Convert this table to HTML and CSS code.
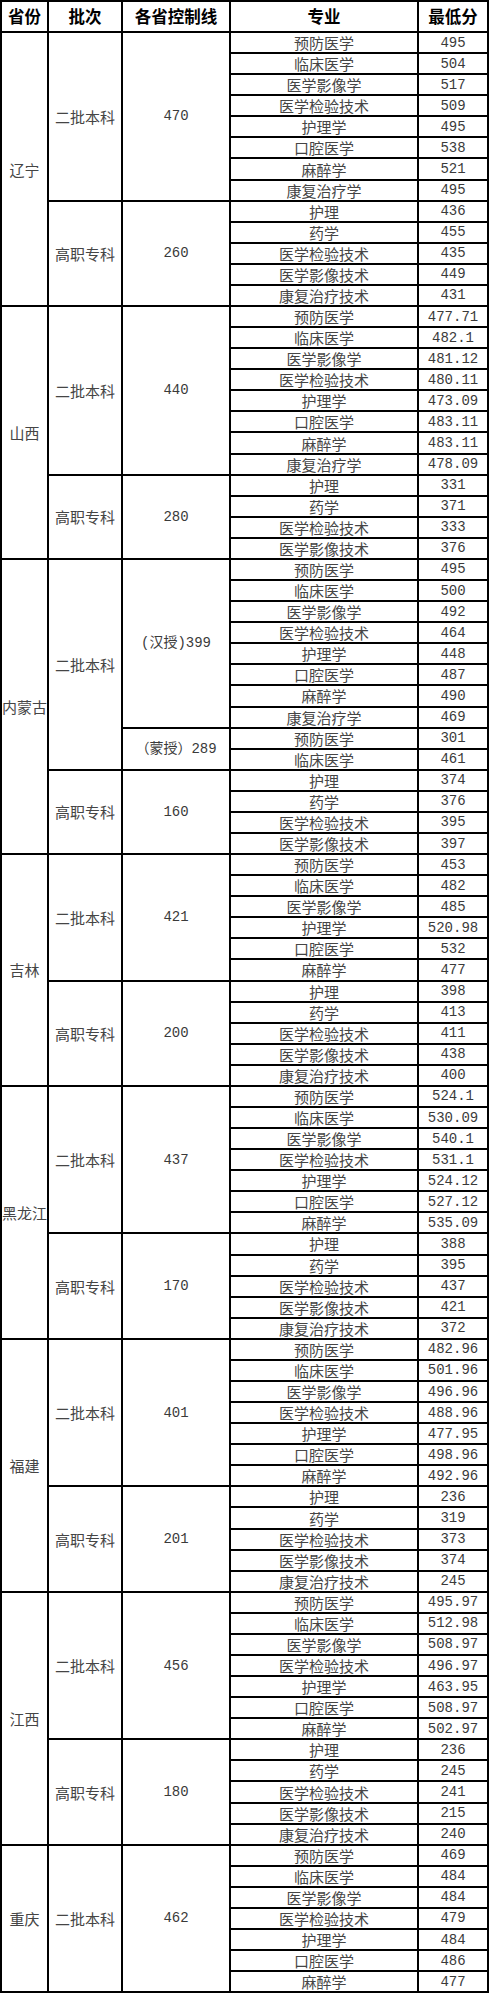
FILE: index.html
```html
<!DOCTYPE html>
<html lang="zh-CN">
<head>
<meta charset="utf-8">
<title>各省录取最低分</title>
<link rel="stylesheet" href="styles.css">
</head>
<body>
<div class="sheet">
  <div class="hd">省份</div><div class="hd">批次</div><div class="hd">各省控制线</div><div class="hd">专业</div><div class="hd">最低分</div>

  <div class="prov s13">辽宁</div><div class="batch s8">二批本科</div><div class="line s8">470</div><div class="major">预防医学</div><div class="score">495</div>
  <div class="major">临床医学</div><div class="score">504</div>
  <div class="major">医学影像学</div><div class="score">517</div>
  <div class="major">医学检验技术</div><div class="score">509</div>
  <div class="major">护理学</div><div class="score">495</div>
  <div class="major">口腔医学</div><div class="score">538</div>
  <div class="major">麻醉学</div><div class="score">521</div>
  <div class="major">康复治疗学</div><div class="score">495</div>
  <div class="batch s5">高职专科</div><div class="line s5">260</div><div class="major">护理</div><div class="score">436</div>
  <div class="major">药学</div><div class="score">455</div>
  <div class="major">医学检验技术</div><div class="score">435</div>
  <div class="major">医学影像技术</div><div class="score">449</div>
  <div class="major">康复治疗技术</div><div class="score">431</div>

  <div class="prov s12">山西</div><div class="batch s8">二批本科</div><div class="line s8">440</div><div class="major">预防医学</div><div class="score">477.71</div>
  <div class="major">临床医学</div><div class="score">482.1</div>
  <div class="major">医学影像学</div><div class="score">481.12</div>
  <div class="major">医学检验技术</div><div class="score">480.11</div>
  <div class="major">护理学</div><div class="score">473.09</div>
  <div class="major">口腔医学</div><div class="score">483.11</div>
  <div class="major">麻醉学</div><div class="score">483.11</div>
  <div class="major">康复治疗学</div><div class="score">478.09</div>
  <div class="batch s4">高职专科</div><div class="line s4">280</div><div class="major">护理</div><div class="score">331</div>
  <div class="major">药学</div><div class="score">371</div>
  <div class="major">医学检验技术</div><div class="score">333</div>
  <div class="major">医学影像技术</div><div class="score">376</div>

  <div class="prov s14">内蒙古</div><div class="batch s10">二批本科</div><div class="line s8">(汉授)399</div><div class="major">预防医学</div><div class="score">495</div>
  <div class="major">临床医学</div><div class="score">500</div>
  <div class="major">医学影像学</div><div class="score">492</div>
  <div class="major">医学检验技术</div><div class="score">464</div>
  <div class="major">护理学</div><div class="score">448</div>
  <div class="major">口腔医学</div><div class="score">487</div>
  <div class="major">麻醉学</div><div class="score">490</div>
  <div class="major">康复治疗学</div><div class="score">469</div>
  <div class="line s2">（蒙授）289</div><div class="major">预防医学</div><div class="score">301</div>
  <div class="major">临床医学</div><div class="score">461</div>
  <div class="batch s4">高职专科</div><div class="line s4">160</div><div class="major">护理</div><div class="score">374</div>
  <div class="major">药学</div><div class="score">376</div>
  <div class="major">医学检验技术</div><div class="score">395</div>
  <div class="major">医学影像技术</div><div class="score">397</div>

  <div class="prov s11">吉林</div><div class="batch s6">二批本科</div><div class="line s6">421</div><div class="major">预防医学</div><div class="score">453</div>
  <div class="major">临床医学</div><div class="score">482</div>
  <div class="major">医学影像学</div><div class="score">485</div>
  <div class="major">护理学</div><div class="score">520.98</div>
  <div class="major">口腔医学</div><div class="score">532</div>
  <div class="major">麻醉学</div><div class="score">477</div>
  <div class="batch s5">高职专科</div><div class="line s5">200</div><div class="major">护理</div><div class="score">398</div>
  <div class="major">药学</div><div class="score">413</div>
  <div class="major">医学检验技术</div><div class="score">411</div>
  <div class="major">医学影像技术</div><div class="score">438</div>
  <div class="major">康复治疗技术</div><div class="score">400</div>

  <div class="prov s12">黑龙江</div><div class="batch s7">二批本科</div><div class="line s7">437</div><div class="major">预防医学</div><div class="score">524.1</div>
  <div class="major">临床医学</div><div class="score">530.09</div>
  <div class="major">医学影像学</div><div class="score">540.1</div>
  <div class="major">医学检验技术</div><div class="score">531.1</div>
  <div class="major">护理学</div><div class="score">524.12</div>
  <div class="major">口腔医学</div><div class="score">527.12</div>
  <div class="major">麻醉学</div><div class="score">535.09</div>
  <div class="batch s5">高职专科</div><div class="line s5">170</div><div class="major">护理</div><div class="score">388</div>
  <div class="major">药学</div><div class="score">395</div>
  <div class="major">医学检验技术</div><div class="score">437</div>
  <div class="major">医学影像技术</div><div class="score">421</div>
  <div class="major">康复治疗技术</div><div class="score">372</div>

  <div class="prov s12">福建</div><div class="batch s7">二批本科</div><div class="line s7">401</div><div class="major">预防医学</div><div class="score">482.96</div>
  <div class="major">临床医学</div><div class="score">501.96</div>
  <div class="major">医学影像学</div><div class="score">496.96</div>
  <div class="major">医学检验技术</div><div class="score">488.96</div>
  <div class="major">护理学</div><div class="score">477.95</div>
  <div class="major">口腔医学</div><div class="score">498.96</div>
  <div class="major">麻醉学</div><div class="score">492.96</div>
  <div class="batch s5">高职专科</div><div class="line s5">201</div><div class="major">护理</div><div class="score">236</div>
  <div class="major">药学</div><div class="score">319</div>
  <div class="major">医学检验技术</div><div class="score">373</div>
  <div class="major">医学影像技术</div><div class="score">374</div>
  <div class="major">康复治疗技术</div><div class="score">245</div>

  <div class="prov s12">江西</div><div class="batch s7">二批本科</div><div class="line s7">456</div><div class="major">预防医学</div><div class="score">495.97</div>
  <div class="major">临床医学</div><div class="score">512.98</div>
  <div class="major">医学影像学</div><div class="score">508.97</div>
  <div class="major">医学检验技术</div><div class="score">496.97</div>
  <div class="major">护理学</div><div class="score">463.95</div>
  <div class="major">口腔医学</div><div class="score">508.97</div>
  <div class="major">麻醉学</div><div class="score">502.97</div>
  <div class="batch s5">高职专科</div><div class="line s5">180</div><div class="major">护理</div><div class="score">236</div>
  <div class="major">药学</div><div class="score">245</div>
  <div class="major">医学检验技术</div><div class="score">241</div>
  <div class="major">医学影像技术</div><div class="score">215</div>
  <div class="major">康复治疗技术</div><div class="score">240</div>

  <div class="prov s7">重庆</div><div class="batch s7">二批本科</div><div class="line s7">462</div><div class="major">预防医学</div><div class="score">469</div>
  <div class="major">临床医学</div><div class="score">484</div>
  <div class="major">医学影像学</div><div class="score">484</div>
  <div class="major">医学检验技术</div><div class="score">479</div>
  <div class="major">护理学</div><div class="score">484</div>
  <div class="major">口腔医学</div><div class="score">486</div>
  <div class="major">麻醉学</div><div class="score">477</div>
</div>
</body>
</html>
```
FILE: styles.css
```css
html, body {
  margin: 0;
  padding: 0;
  background: #fff;
}

.sheet {
  display: grid;
  grid-template-columns: 45px 72px 106px 186px 68px;
  grid-template-rows: 29px;
  grid-auto-rows: 19.08px;
  gap: 2px;
  padding: 2px;
  width: 485px;
  background: #000;
  font-family: "Noto Sans CJK SC", sans-serif;
  font-size: 15px;
  color: #454545;
}

.sheet > div {
  background: #fff;
  display: flex;
  align-items: center;
  justify-content: center;
  white-space: nowrap;
  line-height: 1;
  overflow: hidden;
}

.hd {
  font-weight: 700;
  font-size: 16.5px;
  color: #000;
}

.prov { grid-column: 1; }
.batch { grid-column: 2; }
.line { grid-column: 3; }
.major { grid-column: 4; }
.score { grid-column: 5; }

.line, .score {
  font-family: "Liberation Mono", "Noto Sans CJK SC", monospace;
  font-size: 14px;
  color: #3a3a3a;
}

.s2 { grid-row: span 2; }
.s4 { grid-row: span 4; }
.s5 { grid-row: span 5; }
.s6 { grid-row: span 6; }
.s7 { grid-row: span 7; }
.s8 { grid-row: span 8; }
.s10 { grid-row: span 10; }
.s11 { grid-row: span 11; }
.s12 { grid-row: span 12; }
.s13 { grid-row: span 13; }
.s14 { grid-row: span 14; }
```
